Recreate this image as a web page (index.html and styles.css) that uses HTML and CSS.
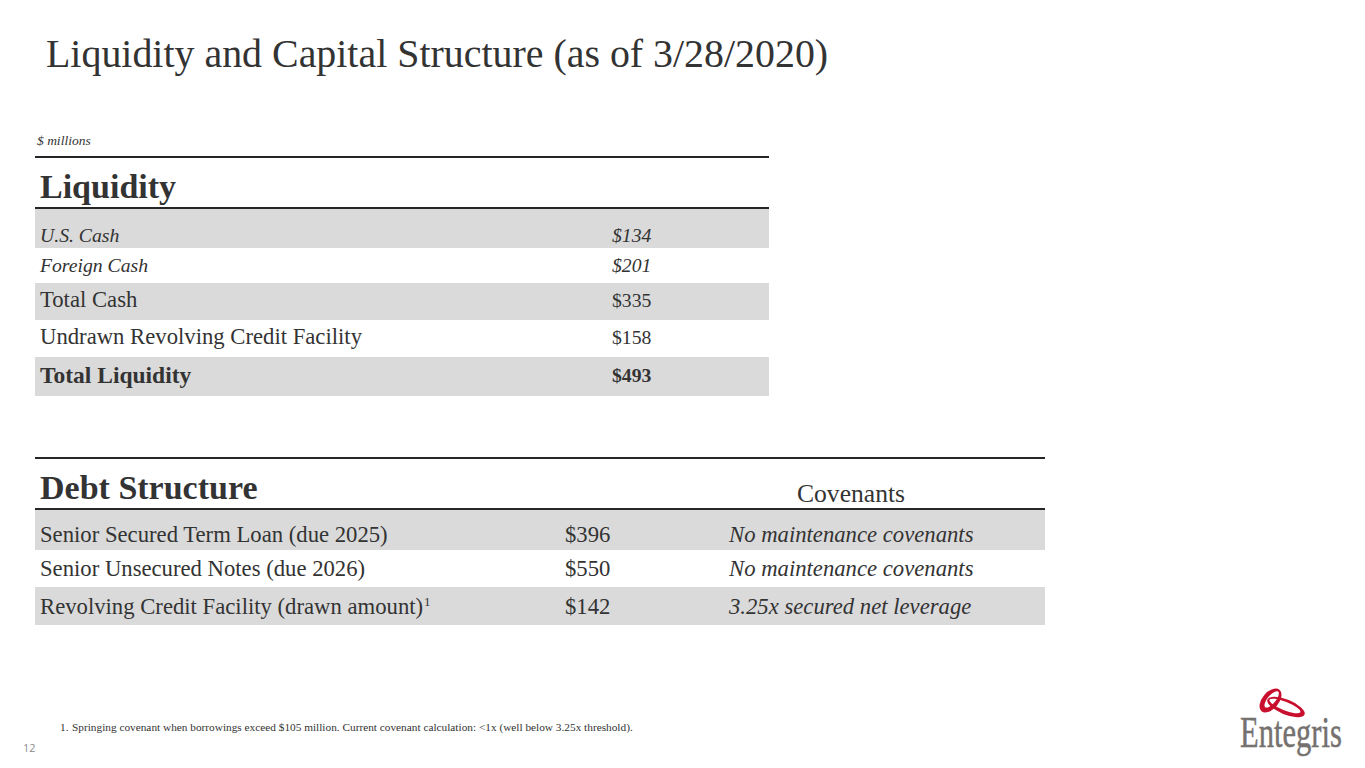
FILE: index.html
```html
<!DOCTYPE html>
<html lang="en">
<head>
<meta charset="utf-8">
<title>Liquidity and Capital Structure</title>
<link rel="stylesheet" href="styles.css">
</head>
<body>
<div class="slide">
  <h1 class="title">Liquidity and Capital Structure (as of 3/28/2020)</h1>
  <div class="units">$ millions</div>

  <section class="table liq">
    <div class="thead"><div class="th">Liquidity</div></div>
    <div class="row shade r-us"><div class="it">U.S. Cash</div><div class="it">$134</div></div>
    <div class="row r-foreign"><div class="it">Foreign Cash</div><div class="it">$201</div></div>
    <div class="row shade r-std"><div>Total Cash</div><div class="val">$335</div></div>
    <div class="row r-std"><div>Undrawn Revolving Credit Facility</div><div class="val">$158</div></div>
    <div class="row shade r-total"><div class="b">Total Liquidity</div><div class="b val">$493</div></div>
  </section>

  <section class="table debt">
    <div class="thead"><div class="th">Debt Structure</div><div></div><div class="th-cov">Covenants</div></div>
    <div class="row shade d1"><div>Senior Secured Term Loan (due 2025)</div><div>$396</div><div class="it">No maintenance covenants</div></div>
    <div class="row d2"><div>Senior Unsecured Notes (due 2026)</div><div>$550</div><div class="it">No maintenance covenants</div></div>
    <div class="row shade d3"><div>Revolving Credit Facility (drawn amount)<sup class="sup">1</sup></div><div>$142</div><div class="it">3.25x secured net leverage</div></div>
  </section>

  <footer class="footer">
    <div class="notes">
      <p class="footnote"><span class="fn-num">1.</span>Springing covenant when borrowings exceed $105 million. Current covenant calculation: &lt;1x (well below 3.25x threshold).</p>
      <div class="pagenum">12</div>
    </div>
    <div class="logo">
      <svg class="rings" viewBox="0 0 54 32" width="54" height="32" aria-hidden="true">
        <path fill="#c8102e" fill-rule="evenodd" d="M25.5 3.78 A14 8.5 -50 0 1 7.5 25.22 A14 8.5 -50 0 1 25.5 3.78 Z M24.2 5.6 A10.2 4.3 -50 0 1 11.1 21.2 A10.2 4.3 -50 0 1 24.2 5.6 Z"/>
        <path fill="#c8102e" fill-rule="evenodd" d="M50.54 28.5 A20 7.5 22 0 1 13.46 13.5 A20 7.5 22 0 1 50.54 28.5 Z M46.3 26.2 A16.6 4.2 22 0 1 15.5 13.8 A16.6 4.2 22 0 1 46.3 26.2 Z"/>
      </svg>
      <div class="logo-text">Entegris</div>
    </div>
  </footer>
</div>
</body>
</html>
```

FILE: styles.css
```css
* { box-sizing: border-box; }
html, body { margin: 0; padding: 0; background: #fff; }
body {
  font-family: "Liberation Serif", "Times New Roman", serif;
  color: #333;
}
.slide {
  width: 1365px;
  height: 768px;
  display: flex;
  flex-direction: column;
  overflow: hidden;
}
.title {
  margin: 0;
  padding: 31px 0 0 46px;
  font-size: 39.9px;
  line-height: 46px;
  font-weight: normal;
  color: #333;
}
.units {
  margin: 56px 0 0 37px;
  font-size: 13.5px;
  line-height: 16px;
  font-style: italic;
  color: #333;
}
.table {
  margin-left: 35px;
  border-top: 2px solid #262626;
}
.liq { width: 734px; margin-top: 7px; }
.debt { width: 1010px; margin-top: 61px; }
.thead {
  display: grid;
  border-bottom: 2px solid #262626;
  padding-left: 5px;
  height: 51px;
}
.liq .thead { grid-template-columns: 1fr; }
.debt .thead { grid-template-columns: 525px 164px 1fr; }
.th {
  padding-top: 10px;
  font-size: 34px;
  line-height: 38px;
  font-weight: bold;
  color: #333;
}
.th-cov {
  padding: 20px 0 0 68px;
  font-size: 25.6px;
  line-height: 29px;
  color: #333;
}
.row {
  display: grid;
  padding-left: 5px;
  font-size: 22.7px;
  line-height: 26px;
  color: #333;
}
.liq .row { grid-template-columns: 572px 1fr; }
.debt .row { grid-template-columns: 525px 164px 1fr; }
.shade { background: #dadada; }
.it { font-style: italic; }
.b { font-weight: bold; }
.val { font-size: 19.7px; }
.r-us { padding-top: 15px; padding-bottom: 2px; font-size: 19.7px; line-height: 22px; }
.r-foreign { padding-top: 6px; padding-bottom: 7px; font-size: 19.7px; line-height: 22px; }
.r-std { padding-top: 4px; padding-bottom: 7px; }
.r-total { padding-top: 5px; padding-bottom: 8px; }
.r-total .b { font-size: 23.5px; }
.r-total .val { font-size: 19.7px; }
.d1 { padding-top: 12px; padding-bottom: 2px; }
.d2 { padding-top: 6px; padding-bottom: 5px; }
.d3 { padding-top: 7px; padding-bottom: 5px; }
.sup {
  font-size: 13px;
  line-height: 0;
  vertical-align: 8px;
  margin-left: 1px;
}
.footer {
  margin-top: auto;
  display: flex;
  justify-content: space-between;
  align-items: flex-end;
  padding: 0 23px 14px 0;
}
.notes { display: flex; flex-direction: column; }
.footnote {
  margin: 0;
  padding-left: 60px;
  font-size: 11.3px;
  line-height: 13px;
  color: #333;
}
.fn-num { display: inline-block; width: 12px; }
.pagenum {
  margin-top: 7px;
  padding-left: 23px;
  font-family: "Open Sans", "Liberation Sans", sans-serif;
  font-size: 11px;
  line-height: 13px;
  color: #8c8c8c;
}
.logo {
  display: flex;
  flex-direction: column;
  align-items: flex-end;
  padding-bottom: 5px;
}
.rings {
  display: block;
  margin-right: 34px;
  margin-bottom: -3px;
  overflow: visible;
}
.logo-text {
  font-family: "Liberation Serif", "Times New Roman", serif;
  font-size: 45px;
  line-height: 34px;
  color: #75716f;
  -webkit-text-stroke: 0.5px #75716f;
  transform: scaleX(0.68);
  transform-origin: right center;
}
```
